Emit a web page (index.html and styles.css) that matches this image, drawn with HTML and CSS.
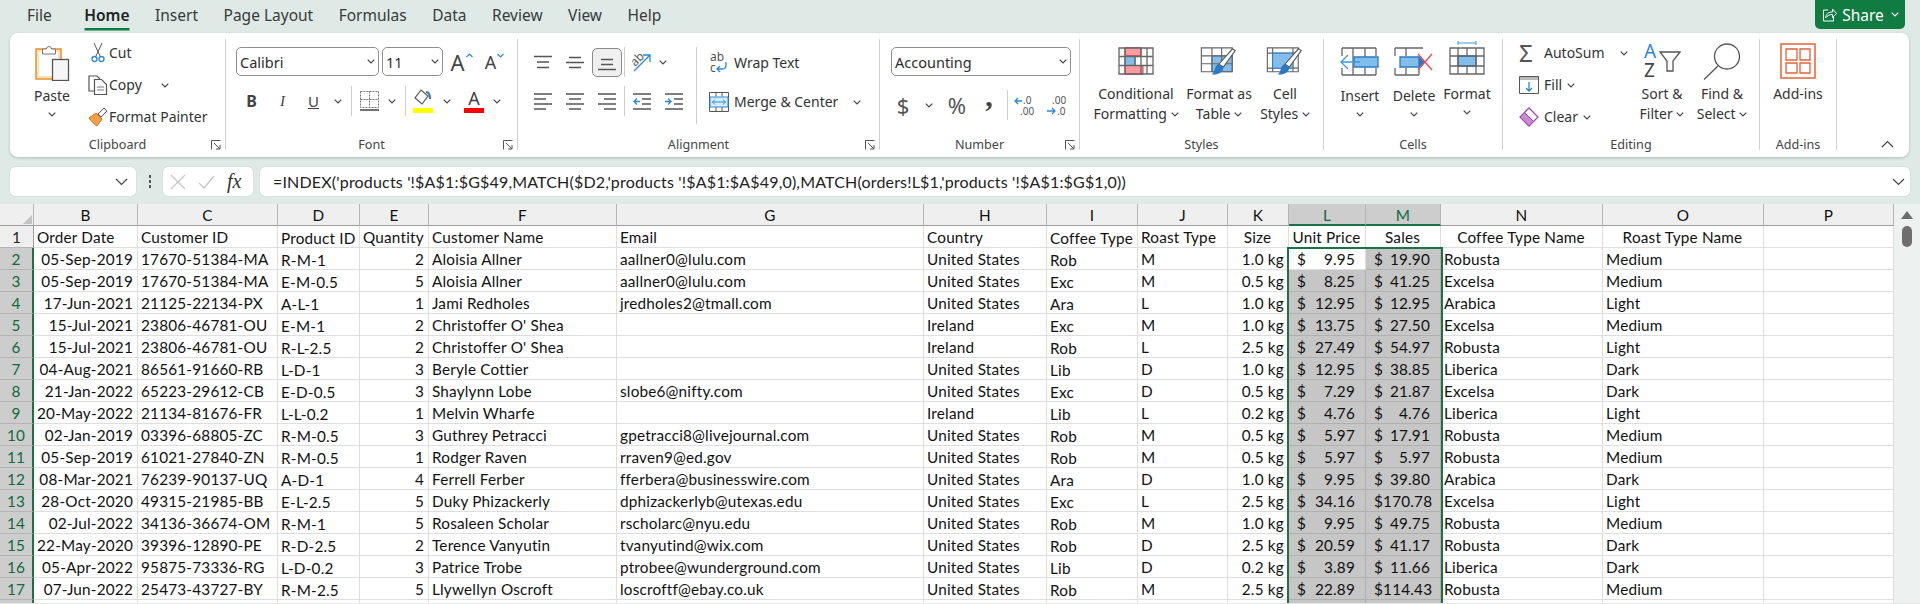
FILE: index.html
```html
<!DOCTYPE html>
<html lang="en">
<head>
    <meta charset="UTF-8" />
    <title>Coffee orders - Excel</title>
    <link rel="stylesheet" href="styles.css">
</head>
<body>

    <svg class="defs">
        <symbol id="chev" viewBox="0 0 8 5"><path d="M.7.7 4 4 7.3.7" fill="none" stroke="currentColor" stroke-width="1.2"/></symbol>
        <symbol id="launcher" viewBox="0 0 10 10"><path d="M.5 9.5V.5h9M3 3l6 6M9 5v4H5" fill="none" stroke="#555"/></symbol>
        <symbol id="brush" viewBox="0 0 30 32"><path d="M25 1l3 2-13 18-5-3z" fill="#fff" stroke="#555" stroke-width="1.2"/><path d="M9 18l6 4c-1 5-6 8-13 7 4-2 3-9 7-11z" fill="#2b79c2"/></symbol>
    </svg>

    <div class="tabs">
        <span>File</span>
        <span class="tab-on">Home</span>
        <span>Insert</span>
        <span>Page Layout</span>
        <span>Formulas</span>
        <span>Data</span>
        <span>Review</span>
        <span>View</span>
        <span>Help</span>
        <div class="share">
            <svg width="16" height="16" viewBox="0 0 16 16"><path d="M7 3H2.500v11h10V9M4.500 11c.5-4 3-6 7-6V2l4 4.500-4 4V7.500c-3 0-5 1-7 3.500z" fill="none" stroke="#fff"/></svg>
            <span>Share</span>
            <svg class="chev chev-white"><use href="#chev"/></svg>
        </div>
    </div>

    <div class="ribbon">

        <section class="group g-clipboard">
            <div class="body">
                <div class="big paste">
                    <div class="ico">
                        <svg width="35" height="38" viewBox="0 0 35 38"><rect x="1" y="6" width="25" height="30" fill="#fde3b8" stroke="#e8912d" stroke-width="1.500"/><rect x="4" y="9" width="19" height="24" fill="#fff"/><path d="M7.500 11V6h4a2.500 2.500 0 0 1 5 0h4v5z" fill="#fff" stroke="#777"/><rect x="17.500" y="16.500" width="16" height="21" fill="#f6f6f6" stroke="#555" stroke-width="1.300"/></svg>
                    </div>
                    <div>Paste</div>
                    <svg class="chev"><use href="#chev"/></svg>
                </div>
                <div class="stack">
                    <div class="row-s">
                        <span class="ico-s"><svg width="14" height="20" viewBox="0 0 14 20"><path d="M3 0l6 13M11 0L5 13" stroke="#555" fill="none"/><circle cx="3.500" cy="16" r="2.500" fill="none" stroke="#2b88d8" stroke-width="1.300"/><circle cx="10.500" cy="16" r="2.500" fill="none" stroke="#2b88d8" stroke-width="1.300"/></svg></span>
                        <span>Cut</span>
                    </div>
                    <div class="row-s">
                        <span class="ico-s"><svg width="20" height="20" viewBox="0 0 20 20"><path d="M6 16H1V1h8l3 3" fill="none" stroke="#555" stroke-width="1.200"/><path d="M6.500 4.500h7l5 5v10h-12z" fill="#fff" stroke="#555" stroke-width="1.200"/><path d="M9 12h7M9 15h7" stroke="#777"/></svg></span>
                        <span>Copy</span>
                        <svg class="chev copy-chev"><use href="#chev"/></svg>
                    </div>
                    <div class="row-s">
                        <span class="ico-s"><svg width="20" height="20" viewBox="0 0 20 20"><path d="M1 11l7-5 6 6-5 7c-2-1-6-5-8-8z" fill="#f2a04b" stroke="#d9741a"/><path d="M10 7l6-6 3 3-6 6z" fill="#fff" stroke="#555"/></svg></span>
                        <span>Format Painter</span>
                    </div>
                </div>
            </div>
            <div class="foot"><span></span><span>Clipboard</span><svg class="launch"><use href="#launcher"/></svg></div>
        </section>

        <section class="group g-font">
            <div class="body two-rows">
                <div class="font-r1">
                    <div class="pick pick-name"><span>Calibri</span><svg class="chev"><use href="#chev"/></svg></div>
                    <div class="pick pick-size"><span>11</span><svg class="chev"><use href="#chev"/></svg></div>
                    <div class="tool grow-a">A<svg width="7" height="5" viewBox="0 0 7 5"><path d="M.5 4l3-3 3 3" fill="none" stroke="#2b88d8" stroke-width="1.200"/></svg></div>
                    <div class="tool shrink-a">A<svg width="7" height="5" viewBox="0 0 7 5"><path d="M.5 1l3 3 3-3" fill="none" stroke="#2b88d8" stroke-width="1.200"/></svg></div>
                </div>
                <div class="font-r2">
                    <b class="fmt-b">B</b>
                    <i class="fmt-i">I</i>
                    <u class="fmt-u">U</u>
                    <svg class="chev"><use href="#chev"/></svg>
                    <span class="sep"></span>
                    <svg width="19" height="20" viewBox="0 0 19 20"><path d="M.5.500h18v16H.5zM9.500.500v16M.5 8.500h18" fill="none" stroke="#777" stroke-dasharray="2 1"/><path d="M0 19h19" stroke="#444" stroke-width="1.500"/></svg>
                    <svg class="chev"><use href="#chev"/></svg>
                    <span class="sep"></span>
                    <svg width="20" height="24" viewBox="0 0 20 24"><path d="M8 1l-6 8 7 6 6-8z" fill="#fff" stroke="#555" stroke-width="1.200"/><path d="M13 3c3 0 4 3 4 7" fill="none" stroke="#2b79c2" stroke-width="2"/><rect y="19" width="20" height="5" fill="#ffff00"/></svg>
                    <svg class="chev"><use href="#chev"/></svg>
                    <div class="fmt-color">A<span class="red-bar"></span></div>
                    <svg class="chev"><use href="#chev"/></svg>
                </div>
            </div>
            <div class="foot"><span></span><span>Font</span><svg class="launch"><use href="#launcher"/></svg></div>
        </section>

        <section class="group g-align">
            <div class="body">
                <div class="two-rows">
                    <div class="align-r1">
                        <svg class="lines" viewBox="0 0 18 14"><path d="M0 1h18M3 6.500h12M3 12h12"/></svg>
                        <svg class="lines" viewBox="0 0 18 14"><path d="M3 2h12M0 7h18M3 12h12"/></svg>
                        <div class="tool-on"><svg class="lines" viewBox="0 0 18 14"><path d="M3 2h12M3 7h12M0 12h18"/></svg></div>
                        <span class="sep"></span>
                        <svg width="20" height="20" viewBox="0 0 20 20"><text x="0" y="12" class="rot-ab" transform="rotate(-45 5 10)">ab</text><path d="M2 19L18 3M11 3h7v7" fill="none" stroke="#2b88d8" stroke-width="1.300"/></svg>
                        <svg class="chev"><use href="#chev"/></svg>
                    </div>
                    <div class="align-r2">
                        <svg class="lines" viewBox="0 0 18 17"><path d="M0 1h18M0 6h12M0 11h18M0 16h12"/></svg>
                        <svg class="lines" viewBox="0 0 18 17"><path d="M0 1h18M3 6h12M0 11h18M3 16h12"/></svg>
                        <svg class="lines" viewBox="0 0 18 17"><path d="M0 1h18M6 6h12M0 11h18M6 16h12"/></svg>
                        <span class="sep"></span>
                        <svg class="lines" viewBox="0 0 18 17"><path d="M0 1h18M9 6h9M9 11h9M0 16h18"/><path d="M7 8.500H1M4 5.500l-3 3 3 3" stroke="#2b88d8"/></svg>
                        <svg class="lines" viewBox="0 0 18 17"><path d="M0 1h18M9 6h9M9 11h9M0 16h18"/><path d="M0 8.500h6M3 5.500l3 3-3 3" stroke="#2b88d8"/></svg>
                    </div>
                </div>
                <span class="sep sep-tall"></span>
                <div class="two-rows">
                    <div class="wrap-row">
                        <svg width="20" height="22" viewBox="0 0 20 22"><text x="1" y="9" class="ic-txt">ab</text><text x="1" y="20" class="ic-txt">c</text><path d="M17 10v3c0 3-2 4-4 4H8M11 14l-3 3 3 3" fill="none" stroke="#2b88d8" stroke-width="1.300"/></svg>
                        <span>Wrap Text</span>
                    </div>
                    <div class="wrap-row">
                        <svg width="20" height="20" viewBox="0 0 20 20"><path d="M.5.500h19v19H.5zM7 .5v4M13 .5v4M7 15v4.500M13 15v4.500" fill="#fff" stroke="#555"/><path d="M1 5h18v10H1z" fill="#d9ecfa" stroke="#2b88d8"/><path d="M3.500 10h13M6 7.500L3.500 10 6 12.500M14 7.500l2.500 2.500-2.500 2.500" fill="none" stroke="#2b88d8"/></svg>
                        <span>Merge &amp; Center</span>
                        <svg class="chev"><use href="#chev"/></svg>
                    </div>
                </div>
            </div>
            <div class="foot"><span></span><span>Alignment</span><svg class="launch"><use href="#launcher"/></svg></div>
        </section>

        <section class="group g-number">
            <div class="body two-rows">
                <div class="pick pick-format"><span>Accounting</span><svg class="chev"><use href="#chev"/></svg></div>
                <div class="number-r2">
                    <span class="fmt-big">$</span>
                    <svg class="chev"><use href="#chev"/></svg>
                    <span class="fmt-big">%</span>
                    <b class="fmt-comma">,</b>
                    <span class="sep"></span>
                    <svg width="20" height="21" viewBox="0 0 20 21"><text x="9" y="9" class="ic-num">.0</text><text x="6" y="20" class="ic-num">.00</text><path d="M8 6H1M4 3L1 6l3 3" fill="none" stroke="#2b88d8" stroke-width="1.300"/></svg>
                    <svg width="20" height="21" viewBox="0 0 20 21"><text x="6" y="9" class="ic-num">.00</text><text x="11" y="20" class="ic-num">.0</text><path d="M1 16h8M6 13l3 3-3 3" fill="none" stroke="#2b88d8" stroke-width="1.300"/></svg>
                </div>
            </div>
            <div class="foot"><span></span><span>Number</span><svg class="launch"><use href="#launcher"/></svg></div>
        </section>

        <section class="group g-styles">
            <div class="body bigs">
                <div class="big">
                    <div class="ico">
                        <svg class="grid-ic" viewBox="0 0 36 28"><path d="M7 .7h16v8H7zM7 18.500h18V27.300H7z" fill="#fb9aa0" stroke="#e2383f"/><path d="M7 9.500h10v9H7z" fill="#83bdec" stroke="#2b79c2"/><path d="M1 1h34v26H1zM1 9.500h34M1 18.500h34M7 1v26M17 9v10M23 1v26M29 1v26" fill="none" stroke="#666" stroke-width="1.300"/></svg>
                    </div>
                    <div>Conditional</div>
                    <div>Formatting <svg class="chev"><use href="#chev"/></svg></div>
                </div>
                <div class="big">
                    <div class="ico">
                        <svg class="grid-ic wide" viewBox="0 0 42 34"><path d="M13 10h23v18H13z" fill="#83bdec" stroke="#2b79c2"/><path d="M1 1h35v27H1zM1 10h35M1 19h35M13 1v27M24 1v27" fill="none" stroke="#666" stroke-width="1.300"/><use href="#brush" x="10" y="1" width="32" height="33"/></svg>
                    </div>
                    <div>Format as</div>
                    <div>Table <svg class="chev"><use href="#chev"/></svg></div>
                </div>
                <div class="big">
                    <div class="ico">
                        <svg class="grid-ic wide" viewBox="0 0 42 34"><path d="M1 1h35v27H1zM1 7h35M7 1v27M30 1v27M1 24h35" fill="none" stroke="#666" stroke-width="1.300"/><path d="M7 7h23v17H7z" fill="#83bdec" stroke="#2b79c2"/><use href="#brush" x="10" y="1" width="32" height="33"/></svg>
                    </div>
                    <div>Cell</div>
                    <div>Styles <svg class="chev"><use href="#chev"/></svg></div>
                </div>
            </div>
            <div class="foot"><span></span><span>Styles</span><span></span></div>
        </section>

        <section class="group g-cells">
            <div class="body bigs">
                <div class="big low">
                    <div class="ico">
                        <svg class="grid-ic wide" viewBox="0 0 40 30"><path d="M2 1h34M2 28h34M2 1v8M2 21v7M13 1v27M25 1v27M36 1v8M36 21v7" fill="none" stroke="#666" stroke-width="1.300"/><path d="M14 10h24v10H14z" fill="#83bdec" stroke="#2b79c2" stroke-width="1.300"/><path d="M20 15H1M8 8l-7 7 7 7" fill="none" stroke="#3a9be0" stroke-width="1.300"/></svg>
                    </div>
                    <div>Insert</div>
                    <svg class="chev"><use href="#chev"/></svg>
                </div>
                <div class="big low">
                    <div class="ico">
                        <svg class="grid-ic wide" viewBox="0 0 40 30"><path d="M1 1h28M1 28h24M1 1v8M1 21v7M12 1v8M12 21v7M25 21v7" fill="none" stroke="#666" stroke-width="1.300"/><path d="M6 10h19v10H6z" fill="#83bdec" stroke="#2b79c2" stroke-width="1.300"/><path d="M25 9l6 6-6 6" fill="#2b79c2"/><path d="M24 7l14 16M38 7L24 23" stroke="#f0484e" stroke-width="1.300"/></svg>
                    </div>
                    <div>Delete</div>
                    <svg class="chev"><use href="#chev"/></svg>
                </div>
                <div class="big">
                    <div class="ico">
                        <svg class="grid-ic over" viewBox="0 0 36 28"><path d="M9-4h18M9-6v4M27-6v4" stroke="#3a9be0" fill="none"/><path d="M9 9h18v10H9z" fill="#83bdec" stroke="#2b79c2" stroke-width="1.300"/><path d="M1 1h34v26H1zM1 9h34M1 19h34M9 1v26M18 1v8M18 19v8M27 1v26" fill="none" stroke="#666" stroke-width="1.300"/></svg>
                    </div>
                    <div>Format</div>
                    <svg class="chev"><use href="#chev"/></svg>
                </div>
            </div>
            <div class="foot"><span></span><span>Cells</span><span></span></div>
        </section>

        <section class="group g-editing">
            <div class="body">
                <div class="stack edit-stack">
                    <div class="row-s">
                        <span class="ico-e sigma">Σ</span>
                        <span>AutoSum</span>
                        <svg class="chev sum-chev"><use href="#chev"/></svg>
                    </div>
                    <div class="row-s">
                        <span class="ico-e"><svg width="20" height="18" viewBox="0 0 20 18"><path d="M.5.500h19v17H.5z" fill="#fff" stroke="#555"/><path d="M1 1h18v3H1z" fill="#bbb"/><path d="M10 6v9M7 12l3 3 3-3" fill="none" stroke="#2b88d8" stroke-width="1.300"/></svg></span>
                        <span>Fill</span>
                        <svg class="chev"><use href="#chev"/></svg>
                    </div>
                    <div class="row-s">
                        <span class="ico-e"><svg width="20" height="20" viewBox="0 0 20 20"><path d="M10 1l9 9-9 9-9-9z" fill="#fff" stroke="#a146b4" stroke-width="1.300"/><path d="M5.500 5.500l9 9-4.500 4.500-9-9z" fill="#c68ad3" stroke="#a146b4"/></svg></span>
                        <span>Clear</span>
                        <svg class="chev"><use href="#chev"/></svg>
                    </div>
                </div>
                <div class="big tall">
                    <div class="ico">
                        <svg width="37" height="35" viewBox="0 0 37 35"><text x="0" y="15" class="sort-a">A</text><text x="0" y="34" class="sort-z">Z</text><path d="M16 9h20l-7 9v10h-6V18z" fill="none" stroke="#555" stroke-width="1.300"/></svg>
                    </div>
                    <div>Sort &amp;</div>
                    <div>Filter <svg class="chev"><use href="#chev"/></svg></div>
                </div>
                <div class="big tall">
                    <div class="ico">
                        <svg width="38" height="37" viewBox="0 0 38 37"><circle cx="24" cy="13.500" r="12.500" fill="none" stroke="#555" stroke-width="1.300"/><path d="M15 23L1 36.500" stroke="#555" stroke-width="1.300"/></svg>
                    </div>
                    <div>Find &amp;</div>
                    <div>Select <svg class="chev"><use href="#chev"/></svg></div>
                </div>
            </div>
            <div class="foot"><span></span><span>Editing</span><span></span></div>
        </section>

        <section class="group g-addins">
            <div class="body">
                <div class="big tall addin">
                    <div class="ico">
                        <svg width="36" height="36" viewBox="0 0 36 36"><path d="M1 1h34v34H1z" fill="none" stroke="#e2633a" stroke-width="1.500"/><path d="M6 6h11v11H6zM20 6h10v11H20zM6 20h11v10H6zM20 20h10v10H20z" fill="none" stroke="#e2633a" stroke-width="1.300"/></svg>
                    </div>
                    <div>Add-ins</div>
                </div>
            </div>
            <div class="foot"><span></span><span>Add-ins</span><span></span></div>
        </section>

        <div class="collapse">
            <svg width="13" height="8" viewBox="0 0 13 8"><path d="M1 7l5.500-5.500L12 7" fill="none" stroke="#444" stroke-width="1.200"/></svg>
        </div>
    </div>

    <div class="formula-bar">
        <div class="name-box"><svg width="13" height="8" viewBox="0 0 13 8"><path d="M1 1l5.500 5.500L12 1" fill="none" stroke="#444" stroke-width="1.200"/></svg></div>
        <div class="dots"><i></i><i></i><i></i></div>
        <div class="fx-box">
            <svg width="16" height="16" viewBox="0 0 16 16"><path d="M1 1l14 14M15 1L1 15" stroke="#c4c4c4" stroke-width="1.200"/></svg>
            <svg width="17" height="14" viewBox="0 0 17 14"><path d="M1 8l5 5L16 1" fill="none" stroke="#c4c4c4" stroke-width="1.200"/></svg>
            <span class="fx">fx</span>
        </div>
        <div class="formula">
            <span>=INDEX('products '!$A$1:$G$49,MATCH($D2,'products '!$A$1:$A$49,0),MATCH(orders!L$1,'products '!$A$1:$G$1,0))</span>
            <svg width="13" height="8" viewBox="0 0 13 8"><path d="M1 1l5.500 5.500L12 1" fill="none" stroke="#444" stroke-width="1.200"/></svg>
        </div>
    </div>

    <div class="sheet">
        <div class="grid-wrap">
            <table class="grid">
                <colgroup>
                    <col class="c-rowhead"><col class="c-b"><col class="c-c"><col class="c-d"><col class="c-e"><col class="c-f"><col class="c-g"><col class="c-h"><col class="c-i"><col class="c-j"><col class="c-k"><col class="c-l"><col class="c-m"><col class="c-n"><col class="c-o"><col class="c-p">
                </colgroup>
                <thead>
                    <tr>
                        <th class="corner"><span class="tri"></span></th>
                        <th>B</th><th>C</th><th>D</th><th>E</th><th>F</th><th>G</th><th>H</th><th>I</th><th>J</th><th>K</th>
                        <th class="col-on">L</th><th class="col-on">M</th><th>N</th><th>O</th><th>P</th>
                    </tr>
                </thead>
                <tbody>
                    <tr class="head-row"><th>1</th><td>Order Date</td><td>Customer ID</td><td>Product ID</td><td>Quantity</td><td>Customer Name</td><td>Email</td><td>Country</td><td>Coffee Type</td><td>Roast Type</td><td class="mid">Size</td><td class="mid">Unit Price</td><td class="mid">Sales</td><td class="mid">Coffee Type Name</td><td class="mid">Roast Type Name</td><td></td></tr>
                    <tr><th>2</th><td class="r">05-Sep-2019</td><td>17670-51384-MA</td><td>R-M-1</td><td class="r">2</td><td>Aloisia Allner</td><td>aallner0@lulu.com</td><td>United States</td><td>Rob</td><td>M</td><td class="r">1.0 kg</td><td class="active"><div class="acc"><span>$</span><span>9.95</span></div></td><td class="sel"><div class="acc"><span>$</span><span>19.90</span></div></td><td>Robusta</td><td>Medium</td><td></td></tr>
                    <tr><th>3</th><td class="r">05-Sep-2019</td><td>17670-51384-MA</td><td>E-M-0.5</td><td class="r">5</td><td>Aloisia Allner</td><td>aallner0@lulu.com</td><td>United States</td><td>Exc</td><td>M</td><td class="r">0.5 kg</td><td class="sel"><div class="acc"><span>$</span><span>8.25</span></div></td><td class="sel"><div class="acc"><span>$</span><span>41.25</span></div></td><td>Excelsa</td><td>Medium</td><td></td></tr>
                    <tr><th>4</th><td class="r">17-Jun-2021</td><td>21125-22134-PX</td><td>A-L-1</td><td class="r">1</td><td>Jami Redholes</td><td>jredholes2@tmall.com</td><td>United States</td><td>Ara</td><td>L</td><td class="r">1.0 kg</td><td class="sel"><div class="acc"><span>$</span><span>12.95</span></div></td><td class="sel"><div class="acc"><span>$</span><span>12.95</span></div></td><td>Arabica</td><td>Light</td><td></td></tr>
                    <tr><th>5</th><td class="r">15-Jul-2021</td><td>23806-46781-OU</td><td>E-M-1</td><td class="r">2</td><td>Christoffer O' Shea</td><td></td><td>Ireland</td><td>Exc</td><td>M</td><td class="r">1.0 kg</td><td class="sel"><div class="acc"><span>$</span><span>13.75</span></div></td><td class="sel"><div class="acc"><span>$</span><span>27.50</span></div></td><td>Excelsa</td><td>Medium</td><td></td></tr>
                    <tr><th>6</th><td class="r">15-Jul-2021</td><td>23806-46781-OU</td><td>R-L-2.5</td><td class="r">2</td><td>Christoffer O' Shea</td><td></td><td>Ireland</td><td>Rob</td><td>L</td><td class="r">2.5 kg</td><td class="sel"><div class="acc"><span>$</span><span>27.49</span></div></td><td class="sel"><div class="acc"><span>$</span><span>54.97</span></div></td><td>Robusta</td><td>Light</td><td></td></tr>
                    <tr><th>7</th><td class="r">04-Aug-2021</td><td>86561-91660-RB</td><td>L-D-1</td><td class="r">3</td><td>Beryle Cottier</td><td></td><td>United States</td><td>Lib</td><td>D</td><td class="r">1.0 kg</td><td class="sel"><div class="acc"><span>$</span><span>12.95</span></div></td><td class="sel"><div class="acc"><span>$</span><span>38.85</span></div></td><td>Liberica</td><td>Dark</td><td></td></tr>
                    <tr><th>8</th><td class="r">21-Jan-2022</td><td>65223-29612-CB</td><td>E-D-0.5</td><td class="r">3</td><td>Shaylynn Lobe</td><td>slobe6@nifty.com</td><td>United States</td><td>Exc</td><td>D</td><td class="r">0.5 kg</td><td class="sel"><div class="acc"><span>$</span><span>7.29</span></div></td><td class="sel"><div class="acc"><span>$</span><span>21.87</span></div></td><td>Excelsa</td><td>Dark</td><td></td></tr>
                    <tr><th>9</th><td class="r">20-May-2022</td><td>21134-81676-FR</td><td>L-L-0.2</td><td class="r">1</td><td>Melvin Wharfe</td><td></td><td>Ireland</td><td>Lib</td><td>L</td><td class="r">0.2 kg</td><td class="sel"><div class="acc"><span>$</span><span>4.76</span></div></td><td class="sel"><div class="acc"><span>$</span><span>4.76</span></div></td><td>Liberica</td><td>Light</td><td></td></tr>
                    <tr><th>10</th><td class="r">02-Jan-2019</td><td>03396-68805-ZC</td><td>R-M-0.5</td><td class="r">3</td><td>Guthrey Petracci</td><td>gpetracci8@livejournal.com</td><td>United States</td><td>Rob</td><td>M</td><td class="r">0.5 kg</td><td class="sel"><div class="acc"><span>$</span><span>5.97</span></div></td><td class="sel"><div class="acc"><span>$</span><span>17.91</span></div></td><td>Robusta</td><td>Medium</td><td></td></tr>
                    <tr><th>11</th><td class="r">05-Sep-2019</td><td>61021-27840-ZN</td><td>R-M-0.5</td><td class="r">1</td><td>Rodger Raven</td><td>rraven9@ed.gov</td><td>United States</td><td>Rob</td><td>M</td><td class="r">0.5 kg</td><td class="sel"><div class="acc"><span>$</span><span>5.97</span></div></td><td class="sel"><div class="acc"><span>$</span><span>5.97</span></div></td><td>Robusta</td><td>Medium</td><td></td></tr>
                    <tr><th>12</th><td class="r">08-Mar-2021</td><td>76239-90137-UQ</td><td>A-D-1</td><td class="r">4</td><td>Ferrell Ferber</td><td>fferbera@businesswire.com</td><td>United States</td><td>Ara</td><td>D</td><td class="r">1.0 kg</td><td class="sel"><div class="acc"><span>$</span><span>9.95</span></div></td><td class="sel"><div class="acc"><span>$</span><span>39.80</span></div></td><td>Arabica</td><td>Dark</td><td></td></tr>
                    <tr><th>13</th><td class="r">28-Oct-2020</td><td>49315-21985-BB</td><td>E-L-2.5</td><td class="r">5</td><td>Duky Phizackerly</td><td>dphizackerlyb@utexas.edu</td><td>United States</td><td>Exc</td><td>L</td><td class="r">2.5 kg</td><td class="sel"><div class="acc"><span>$</span><span>34.16</span></div></td><td class="sel"><div class="acc"><span>$</span><span>170.78</span></div></td><td>Excelsa</td><td>Light</td><td></td></tr>
                    <tr><th>14</th><td class="r">02-Jul-2022</td><td>34136-36674-OM</td><td>R-M-1</td><td class="r">5</td><td>Rosaleen Scholar</td><td>rscholarc@nyu.edu</td><td>United States</td><td>Rob</td><td>M</td><td class="r">1.0 kg</td><td class="sel"><div class="acc"><span>$</span><span>9.95</span></div></td><td class="sel"><div class="acc"><span>$</span><span>49.75</span></div></td><td>Robusta</td><td>Medium</td><td></td></tr>
                    <tr><th>15</th><td class="r">22-May-2020</td><td>39396-12890-PE</td><td>R-D-2.5</td><td class="r">2</td><td>Terence Vanyutin</td><td>tvanyutind@wix.com</td><td>United States</td><td>Rob</td><td>D</td><td class="r">2.5 kg</td><td class="sel"><div class="acc"><span>$</span><span>20.59</span></div></td><td class="sel"><div class="acc"><span>$</span><span>41.17</span></div></td><td>Robusta</td><td>Dark</td><td></td></tr>
                    <tr><th>16</th><td class="r">05-Apr-2022</td><td>95875-73336-RG</td><td>L-D-0.2</td><td class="r">3</td><td>Patrice Trobe</td><td>ptrobee@wunderground.com</td><td>United States</td><td>Lib</td><td>D</td><td class="r">0.2 kg</td><td class="sel"><div class="acc"><span>$</span><span>3.89</span></div></td><td class="sel"><div class="acc"><span>$</span><span>11.66</span></div></td><td>Liberica</td><td>Dark</td><td></td></tr>
                    <tr><th>17</th><td class="r">07-Jun-2022</td><td>25473-43727-BY</td><td>R-M-2.5</td><td class="r">5</td><td>Llywellyn Oscroft</td><td>loscroftf@ebay.co.uk</td><td>United States</td><td>Rob</td><td>M</td><td class="r">2.5 kg</td><td class="sel"><div class="acc"><span>$</span><span>22.89</span></div></td><td class="sel"><div class="acc"><span>$</span><span>114.43</span></div></td><td>Robusta</td><td>Medium</td><td></td></tr>
                    <tr><th></th><td></td><td></td><td></td><td></td><td></td><td></td><td></td><td></td><td></td><td></td><td class="sel"></td><td class="sel"></td><td></td><td></td><td></td></tr>
                </tbody>
            </table>
            <div class="selection"></div>
        </div>
        <div class="scrollbar">
            <svg width="12" height="8" viewBox="0 0 12 8"><path d="M6 0l6 8H0z" fill="#6e6e6e"/></svg>
            <div class="thumb"></div>
        </div>
    </div>

</body>
</html>
```

FILE: styles.css
```css
html, body {
    margin: 0;
    height: 604px;
    overflow: hidden;
}

body {
    background-color: #dfe9e6;
    font-family: "Noto Sans", "Open Sans", sans-serif;
    font-size: 14px;
    color: #333;
}

.defs {
    display: none;
}

svg {
    display: block;
    flex: none;
}

.chev {
    width: 8px;
    height: 5px;
    color: #444;
}

.chev-white {
    color: white;
}

/* tabs row */
.tabs {
    height: 33px;
    display: flex;
    align-items: center;
    gap: 25.5px;
    padding-left: 27px;
    font-size: 15.5px;
    color: #3a3a3a;
}

.tabs > span {
    padding-bottom: 3px;
}

.tab-on {
    font-weight: 600;
    color: #222;
    box-shadow: 0 3px 0 -0.5px #107c41;
    line-height: 25px;
    margin-left: 7px;
    padding-bottom: 0 !important;
    margin-bottom: 3px;
}

.share {
    margin-left: auto;
    margin-right: 15px;
    margin-bottom: 4px;
    width: 90px;
    height: 29px;
    background-color: #107c41;
    color: white;
    border-radius: 0 0 5px 5px;
    display: flex;
    align-items: center;
    justify-content: center;
    gap: 5px;
    font-size: 15.5px;
}

.share .chev {
    margin-left: 2px;
}

/* ribbon */
.ribbon {
    margin: 0 11px 0 10px;
    height: 124px;
    background-color: white;
    border-radius: 8px;
    box-shadow: 0 1px 3px rgba(0, 0, 0, 0.2);
    display: flex;
    line-height: 20px;
}

.group {
    margin-top: 6px;
    height: 111px;
    border-right: 1px solid #d0d0d0;
    box-sizing: border-box;
    display: flex;
    flex-direction: column;
}

.g-clipboard { width: 216px; }
.g-font { width: 292px; }
.g-align { width: 362px; }
.g-number { width: 200px; }
.g-styles { width: 244px; }
.g-cells { width: 179px; }
.g-editing { width: 257px; }
.g-addins { width: 77px; }

.body {
    flex: 1;
    display: flex;
    min-height: 0;
}

.foot {
    height: 12px;
    line-height: 14px;
    font-size: 12.6px;
    color: #444;
    display: grid;
    grid-template-columns: 1fr auto 1fr;
    align-items: end;
}

.launch {
    width: 10px;
    height: 10px;
    justify-self: end;
    margin: 0 4px 2px 0;
}

.sep {
    width: 1px;
    height: 30px;
    background-color: #cfcfcf;
}

.sep-tall {
    height: 77px;
    margin: 8px 0 0 7px;
}

/* big buttons with the label under the icon */
.big {
    display: flex;
    flex-direction: column;
    align-items: center;
    padding-top: 8px;
    box-sizing: border-box;
    white-space: nowrap;
}

.big .ico {
    height: 37px;
}

.big .chev {
    display: inline-block;
    vertical-align: 2px;
}

.big > .chev {
    margin-top: 6px;
}

.low > div:nth-child(2) {
    margin-top: 2px;
}

.paste {
    width: 50px;
    margin-left: 17px;
    padding-top: 4px;
}

.paste .ico {
    height: 43px;
}

.tall {
    padding-top: 4px;
}

.tall .ico {
    height: 41px;
}

.bigs {
    display: grid;
}

.g-styles .bigs {
    grid-template-columns: 96px 70px 62px;
    padding-left: 8px;
}

.g-cells .bigs {
    grid-template-columns: 72px 36px 70px;
}

.grid-ic {
    width: 36px;
    height: 28px;
    overflow: visible;
}

.grid-ic.wide {
    width: 40px;
    height: 30px;
}

/* rows of small commands */
.stack {
    margin-left: 10px;
    display: flex;
    flex-direction: column;
    gap: 6px;
    padding-top: 1px;
}

.row-s {
    height: 26px;
    display: flex;
    align-items: center;
}

.ico-s {
    width: 22px;
    display: flex;
    justify-content: center;
}

.copy-chev {
    margin-left: 19px;
}

.edit-stack {
    width: 116px;
    margin-left: 13px;
    flex: none;
    box-sizing: border-box;
}

.ico-e {
    width: 28px;
    display: flex;
    padding-left: 3px;
    box-sizing: border-box;
}

.row-s .ico-e + span + .chev {
    margin-left: 5px;
}

.row-s .ico-e + span + .sum-chev {
    margin-left: 15px;
}

.sigma {
    font-size: 24px;
    color: #555;
    line-height: 26px;
}

.g-editing .big {
    width: 60px;
}

.sort-a {
    font: 19px "Noto Sans", sans-serif;
    fill: #2b88d8;
}

.sort-z {
    font: 19px "Noto Sans", sans-serif;
    fill: #444;
}

.addin {
    width: 76px;
}

.collapse {
    flex: 1;
    display: flex;
    justify-content: flex-end;
    align-items: flex-end;
    padding: 0 15px 9px 0;
}

/* rows of the font, alignment and number groups */
.two-rows {
    display: flex;
    flex-direction: column;
    gap: 10px;
    padding-top: 8px;
}

.font-r1 {
    display: flex;
    align-items: center;
    margin-left: 10px;
}

.pick {
    height: 29px;
    box-sizing: border-box;
    border: 1px solid #8f8f8f;
    border-radius: 5px;
    display: flex;
    align-items: center;
    justify-content: space-between;
    padding: 0 3px;
    font-size: 14.5px;
    color: #2d2d2d;
}

.pick-name { width: 143px; }
.pick-size { width: 61px; margin-left: 3px; }
.pick-format { width: 180px; margin-left: 11px; }

.tool {
    width: 33px;
    height: 29px;
    display: flex;
    justify-content: center;
    align-items: center;
    font-size: 22px;
    color: #444;
}

.grow-a { margin-left: 2px; }

.grow-a svg { margin: -12px 0 0 1px; }
.shrink-a { font-size: 18px; }
.shrink-a svg { margin: -12px 0 0 1px; }

.font-r2,
.align-r1,
.align-r2,
.number-r2 {
    display: grid;
    height: 29px;
    place-items: center;
}

.font-r2 {
    margin-left: 10px;
    grid-template-columns: 31px 31px 31px 18px 9px 26px 20px 6px 30px 18px 36px 10px;
}

.fmt-b, .fmt-i, .fmt-u {
    font-size: 15px;
    color: #444;
    font-family: "Liberation Serif", serif;
}

.fmt-b { font-family: "Noto Sans", sans-serif; font-size: 16px; }
.fmt-u { font-family: "Noto Sans", sans-serif; }

.fmt-color {
    width: 20px;
    text-align: center;
    font-size: 18px;
    line-height: 19px;
    color: #444;
}

.red-bar {
    display: block;
    height: 5px;
    background-color: #f00;
}

.g-align .body {
    padding-left: 9px;
}

.lines {
    width: 18px;
    height: 17px;
    fill: none;
    stroke: #555;
    stroke-width: 1.300;
}

.align-r1 {
    grid-template-columns: 32px 32px 32px 2px 34px 8px;
}

.align-r2 {
    grid-template-columns: 32px 32px 32px 2px 34px 30px;
}

.tool-on {
    width: 30px;
    height: 29px;
    box-sizing: border-box;
    border: 1px solid #8a8a8a;
    border-radius: 5px;
    background-color: #f0f0f0;
    display: flex;
    align-items: flex-end;
    justify-content: center;
    padding-bottom: 3px;
}

.rot-ab {
    font-size: 12px;
    fill: #555;
}

.ic-txt {
    font-size: 12px;
    fill: #555;
}

.ic-num {
    font-size: 10px;
    fill: #555;
}

.wrap-row {
    height: 29px;
    box-sizing: border-box;
    display: flex;
    align-items: center;
    padding: 3px 0 0 12px;
}

.wrap-row svg:first-child {
    margin-right: 5px;
}

.wrap-row .chev {
    margin-left: 15px;
}

.number-r2 {
    margin-left: 11px;
    grid-template-columns: 24px 28px 28px 36px 1px 32px 32px;
    width: 181px;
}

.fmt-big {
    font-size: 22px;
    color: #555;
}

.fmt-comma {
    font-size: 30px;
    color: #444;
    line-height: 20px;
    padding-bottom: 18px;
    font-family: "Liberation Serif", serif;
}

/* formula bar */
.formula-bar {
    margin: 10px 10px 0;
    height: 29px;
    display: flex;
    align-items: stretch;
    line-height: 29px;
}

.name-box, .fx-box, .formula {
    background-color: white;
    border-radius: 5px;
    box-shadow: 0 0 1px rgba(0, 0, 0, 0.25);
    display: flex;
    align-items: center;
}

.name-box {
    width: 126px;
    justify-content: flex-end;
    padding-right: 8px;
    box-sizing: border-box;
}

.dots {
    width: 27px;
    display: flex;
    flex-direction: column;
    align-items: center;
    justify-content: center;
    gap: 2px;
}

.dots i {
    width: 2px;
    height: 3px;
    background-color: #555;
}

.fx-box {
    width: 90px;
    gap: 12px;
    padding-left: 7px;
    box-sizing: border-box;
}

.fx {
    font-family: "Liberation Serif", serif;
    font-style: italic;
    font-size: 20px;
    color: #333;
}

.formula {
    margin-left: 7px;
    flex: 1;
    justify-content: space-between;
    padding: 0 5px 0 13px;
    font-family: Lato, sans-serif;
    font-size: 16px;
    letter-spacing: 0.18px;
    color: #222;
}

/* sheet */
.sheet {
    margin-top: 8px;
    height: 399px;
    display: flex;
    overflow: hidden;
}

.grid-wrap {
    position: relative;
    width: 1894px;
    height: 399px;
    overflow: hidden;
    background-color: white;
}

.grid {
    table-layout: fixed;
    border-collapse: separate;
    border-spacing: 0;
    width: 1894px;
    font-family: Lato, sans-serif;
    font-size: 15.3px;
    letter-spacing: 0.2px;
    color: #111;
}

.c-rowhead { width: 34px; }
.c-b { width: 104px; }
.c-c { width: 140px; }
.c-d { width: 82px; }
.c-e { width: 69px; }
.c-f { width: 188px; }
.c-g { width: 307px; }
.c-h { width: 123px; }
.c-i { width: 91px; }
.c-j { width: 90px; }
.c-k { width: 61px; }
.c-l { width: 77px; }
.c-m { width: 75px; }
.c-n { width: 162px; }
.c-o { width: 161px; }
.c-p { width: 130px; }

.grid thead th {
    height: 22px;
    box-sizing: border-box;
    padding: 2px 0 0;
    background-color: #efefef;
    border-right: 1px solid #b5b5b5;
    border-bottom: 1px solid #9e9e9e;
    font-weight: normal;
    line-height: 19px;
}

.grid thead th.col-on {
    background-color: #cdcdcd;
    color: #0e6b3b;
    border-bottom: 2px solid #1e7145;
    line-height: 18px;
}

.corner {
    position: relative;
}

.tri {
    position: absolute;
    right: 1px;
    bottom: 1px;
    border-style: solid;
    border-width: 0 0 9px 9px;
    border-color: transparent transparent #c4c4c4 transparent;
}

.grid tbody th {
    box-sizing: border-box;
    padding: 2px 0 0;
    height: 22px;
    font-weight: normal;
    line-height: 19px;
    background-color: #cdcdcd;
    color: #0e6b3b;
    border-right: 2px solid #1e7145;
    border-bottom: 1px solid #b5b5b5;
}

.grid tbody tr.head-row th {
    background-color: #efefef;
    color: #222;
    border-right: 1px solid #9e9e9e;
}

.grid td {
    box-sizing: border-box;
    height: 22px;
    padding: 2px 4px 0 3px;
    border-right: 1px solid #dedede;
    border-bottom: 1px solid #dedede;
    line-height: 19px;
    white-space: nowrap;
    overflow: hidden;
}

.grid tbody td:nth-child(4),
.grid tbody td:nth-child(9) {
    padding-top: 3px;
    line-height: 18px;
}

.grid td.r { text-align: right; }
.grid td.mid { text-align: center; }

.grid td.sel {
    background-color: #c6c6c6;
    border-right-color: #b0b0b0;
    border-bottom-color: #b0b0b0;
}

.acc {
    display: flex;
    justify-content: space-between;
    padding: 0 6px 0 5px;
}

.selection {
    position: absolute;
    left: 1287px;
    top: 43px;
    width: 156px;
    height: 400px;
    box-sizing: border-box;
    border: 2px solid #1e7145;
}

.scrollbar {
    flex: 1;
    background-color: #edf1f0;
    display: flex;
    flex-direction: column;
    align-items: center;
    padding-top: 7px;
    gap: 7px;
}

.thumb {
    width: 10px;
    height: 21px;
    border-radius: 5px;
    background-color: #6e6e6e;
}
```
